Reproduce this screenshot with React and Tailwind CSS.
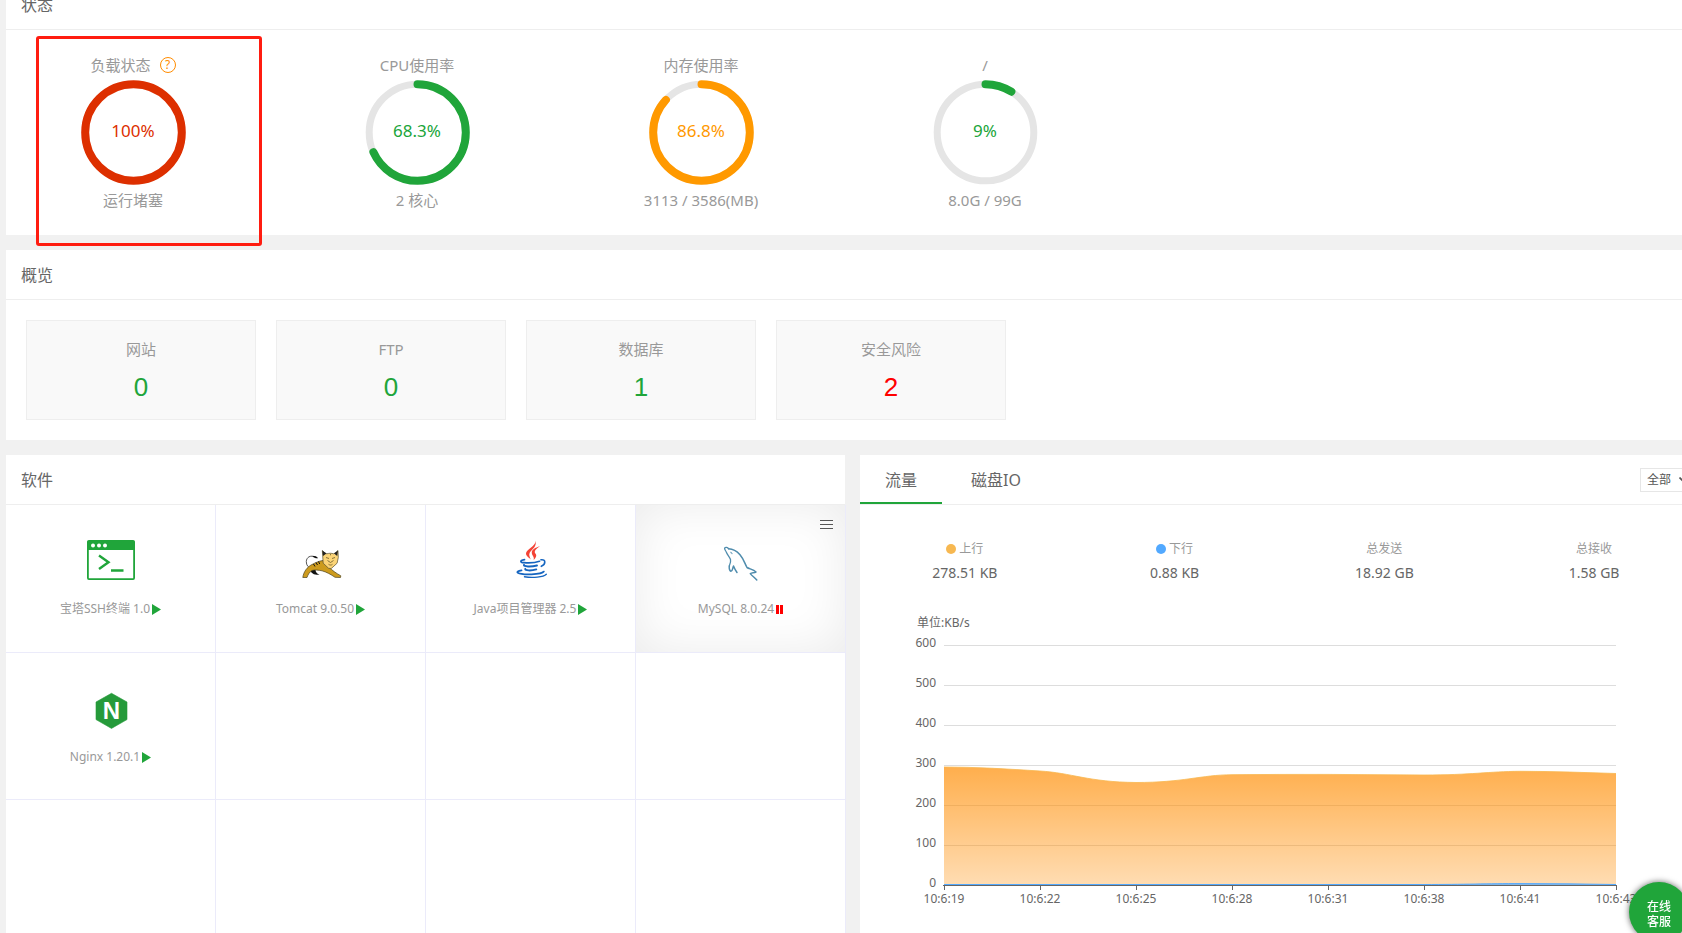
import { useState } from 'react';
import clsx from 'clsx';

const gauges = [
  { title: '负载状态', help: true, percent: 100, label: '100%', desc: '运行堵塞', color: '#dd2f00' },
  { title: 'CPU使用率', percent: 68.3, label: '68.3%', desc: '2 核心', color: '#20a53a' },
  { title: '内存使用率', percent: 86.8, label: '86.8%', desc: '3113 / 3586(MB)', color: '#ff9900' },
  { title: '/', percent: 9, label: '9%', desc: '8.0G / 99G', color: '#20a53a' },
];

const overview = [
  { name: '网站', count: 0 },
  { name: 'FTP', count: 0 },
  { name: '数据库', count: 1 },
  { name: '安全风险', count: 2, danger: true },
];

const software = [
  { name: '宝塔SSH终端 1.0', icon: TerminalIcon, running: true },
  { name: 'Tomcat 9.0.50', icon: TomcatIcon, running: true },
  { name: 'Java项目管理器 2.5', icon: JavaIcon, running: true },
  { name: 'MySQL 8.0.24', icon: MysqlIcon, running: false, active: true },
  { name: 'Nginx 1.20.1', icon: NginxIcon, running: true },
];

const traffic = [
  { name: '上行', value: '278.51 KB', dot: 'bg-[#f7b851]' },
  { name: '下行', value: '0.88 KB', dot: 'bg-[#52a9ff]' },
  { name: '总发送', value: '18.92 GB' },
  { name: '总接收', value: '1.58 GB' },
];

const yLabels = [600, 500, 400, 300, 200, 100, 0];
const xLabels = ['10:6:19', '10:6:22', '10:6:25', '10:6:28', '10:6:31', '10:6:38', '10:6:41', '10:6:43'];

const upLine =
  'M0 122 C32 122 64 124 96 126 C128 128 144 137 192 137.5 C240 137.5 256 130 288 129.7 C320 129.4 352 129.4 384 129.4 C416 129.4 448 130 480 130 C528 130 544 126.5 576 126.3 C608 126.3 640 127.5 672 128.5';
const downLine = 'M0 239.5 H480 C520 239.5 544 238.6 576 238.6 C608 238.6 640 239 672 239.5';

function TerminalIcon() {
  return (
    <svg className="size-12" viewBox="0 0 48 48" fill="none">
      <rect x="0.9" y="3.9" width="46.2" height="38.2" rx="1" stroke="#20a53a" strokeWidth="1.8" />
      <path d="M0.5 4h47v9h-47z" fill="#20a53a" />
      <circle cx="6" cy="8.4" r="2" fill="#fff" />
      <circle cx="12" cy="8.4" r="2" fill="#fff" />
      <circle cx="18" cy="8.4" r="2" fill="#fff" />
      <path d="M12 18.5l9.5 6.7-9.5 6.8M24 33.5h12.5" stroke="#20a53a" strokeWidth="2.4" />
    </svg>
  );
}

function TomcatIcon() {
  return (
    <svg className="size-12" viewBox="0 0 48 48" fill="none">
      {/* 尾巴 */}
      <path d="M19 20.2C13 17.5 9.5 20.5 9.3 24.5c-.1 4 2.2 6 5 7.5" stroke="#444" strokeWidth="0.9" />
      <path d="M15.5 19.3c2-1 5 0 5.5 2-2 .3-4-.4-5.5-2z" fill="#111" />
      {/* 身体 */}
      <path d="M13 32.5c1 4 4 5.5 9.5 5.3-3-1.3-4-2.8-4-5.3z" fill="#111" />
      <path
        d="M5.8 40.5C6.5 35 10 30 15 27.5c3.5-1.8 7-3.5 11-4l5.5 6.5c4 3.5 8 6.5 12.3 8.8l-.3 1.7-5.5-.2c-4-2.8-8.500-5.300-13-6.500-3.500-.6-7-1.300-10-.3-2.500 1.500-4 4-5 7z"
        fill="#cd9b1d"
        stroke="#4d431f"
        strokeWidth="0.7"
      />
      <path d="M16.500 27l1.500 2.500M19 25.500l1.500 2.500M21.500 24.500l1.200 2.500" stroke="#111" strokeWidth="1" />
      {/* 头 */}
      <path
        d="M25.3 13.500c1.500 1.500 3 3 4.500 3.300 2.500-.7 4.500-.7 7 0 1.500-.8 3-2 4.200-3.300l.3 7-1.200 5.700-6 5.500-2.600-.5-5.300-5z"
        fill="#fbd477"
        stroke="#57502f"
        strokeWidth="0.7"
      />
      <path d="M25.3 13.500l.7 5.500 3.500-2.500zM41 13.500l-.8 5.500-3.200-2.500z" fill="#222" />
      <path
        d="M29 20.500l3 1M38 20.500l-3 1M33.500 16.800v1.500M30.500 23.500l3 2 3-2M31.500 27.300c1.500 1 3 1 4 0"
        stroke="#6b5a28"
        strokeWidth="0.8"
      />
    </svg>
  );
}

function JavaIcon() {
  return (
    <svg className="size-12" viewBox="0 0 48 48" fill="none">
      <g fill="#f44336">
        <path d="M28.300 3.700C29.500 9 19 12 19 16.500c0 2.500 3 4 4.700 6-1-3-2.200-4.500-.9-7C24.500 12.500 30.500 9.500 28.300 3.700z" />
        <path d="M33 9.300c-5 1.200-8.500 3.700-8.200 6.700.2 2.500 2.700 3.500 1.900 7 2.800-3 3.300-4.500 1.500-6.700C27 14.500 28.500 12 33 9.300z" />
      </g>
      <g stroke="#1565c0" strokeLinecap="round">
        <path d="M17.500 22.700c-5 .8-4.500 2.700-.5 3 5 .4 11 .2 15.500-1.400" strokeWidth="1.700" />
        <path d="M34 22.800c5-.8 5 4.500.3 6.500" strokeWidth="1.600" />
        <path d="M17 27.800c-1 2 7 2.200 13 .7" strokeWidth="1.900" />
        <path d="M18.300 31.800c-.8 2 6 2.100 11 .6" strokeWidth="1.900" />
        <path d="M14.500 33.300c-3.500.6-5 1.600-3.700 2.500 4 2.500 24 2 26-1.200" strokeWidth="1.800" />
        <path d="M17.500 39.800c8 1.200 19 .4 21.800-2.600" strokeWidth="1.400" />
      </g>
    </svg>
  );
}

function MysqlIcon() {
  return (
    <svg className="size-12" viewBox="0 0 48 48" fill="none" stroke="#4f8cad" strokeLinejoin="round" strokeLinecap="round">
      <path d="M12.300 29C12 31.500 12.500 33.500 14 34.300c1.500 0 1.500-3 2.500-5.300 1 2.500 2 4.500 3.500 6.500" strokeWidth="1.500" />
      <path
        d="M12.300 29c1.200-2.500 1.800-4 1.200-6.500C12.500 19.500 10.500 18 9.500 15.500 8.700 13.500 7.300 12.500 7.600 11.200c1-1.400 3-.8 4.200.6"
        strokeWidth="1.300"
      />
      <path
        d="M11.500 11.700c4.500.1 8.500 2.500 11.500 6 3.500 4 4.700 8.500 7 12.800 2.500 1.500 6.500 1.800 9 4.500-2 .9-4 .7-5.700 1.600 1.700 2.400 4.500 4 6.500 6.400"
        strokeWidth="1.500"
      />
      <path d="M14 15.300c1 .2 1.300 1 1.200 1.700-.8-.1-1.200-.8-1.200-1.700z" strokeWidth="0.6" />
    </svg>
  );
}

function NginxIcon() {
  return (
    <svg className="size-12" viewBox="0 0 48 48">
      <path
        d="M24.500 8.300L40 17v17.600l-15.500 8.800L9 34.600V17z"
        fill="#259a3a"
        stroke="#259a3a"
        strokeWidth="0.6"
        strokeLinejoin="round"
      />
      <text
        x="24.5"
        y="34"
        textAnchor="middle"
        className="font-['Liberation_Sans',sans-serif] text-[24px] font-bold"
        fill="#fff"
      >
        N
      </text>
    </svg>
  );
}

function Status({ running }) {
  return running ? (
    <svg className="ml-0.5 h-[11px] w-[9px]" viewBox="0 0 9 11" fill="#20a53a">
      <path d="M0 0l9 5.500L0 11z" />
    </svg>
  ) : (
    <svg className="ml-0.5 h-[9px] w-[7px]" viewBox="0 0 7 9" fill="#ff0000">
      <path d="M0 0h3v9H0zM4 0h3v9H4z" />
    </svg>
  );
}

function PanelTitle({ children }) {
  return <h2 className="h-[50px] border-b border-[#eee] pl-[15px] text-base leading-[50px] text-[#666]">{children}</h2>;
}

function Gauge({ item }) {
  const full = item.percent === 100;
  return (
    <li className="flex w-[204px] flex-col items-center text-[15px] leading-[30px] text-[#999]">
      <div className="flex items-center gap-[9px]">
        <span>{item.title}</span>
        {item.help && (
          <button
            aria-label="负载说明"
            className="flex size-4 items-center justify-center rounded-full border border-[#ff8c00] text-xs leading-none text-[#ff8c00]"
          >
            ?
          </button>
        )}
      </div>
      <div className="grid size-[105px] place-items-center">
        <svg className="col-start-1 row-start-1 size-[105px] -rotate-90" viewBox="0 0 105 105" fill="none">
          <circle cx="52.5" cy="52.5" r="48.3" stroke="#e5e5e5" strokeWidth="7" />
          <circle
            cx="52.5"
            cy="52.5"
            r="48.3"
            pathLength="100"
            stroke={item.color}
            strokeWidth="8"
            strokeLinecap="round"
            strokeDasharray={full ? undefined : `${item.percent} 100`}
          />
        </svg>
        <span className="col-start-1 row-start-1 pb-1 text-[17px]" style={{ color: item.color }}>
          {item.label}
        </span>
      </div>
      <div>{item.desc}</div>
    </li>
  );
}

function Chart() {
  return (
    <div className="pr-[83px] pl-[84px] text-xs text-[#666]">
      <div className="-ml-[27px] h-4 leading-4">单位:KB/s</div>
      <div className="relative mt-3.5 h-[240px]">
        <div className="absolute -top-[11px] right-full flex flex-col pr-2 text-right">
          {yLabels.map((y) => (
            <span key={y} className="h-10 leading-[18px]">
              {y}
            </span>
          ))}
        </div>
        <svg className="block h-[246px] w-full overflow-visible" viewBox="0 0 672 246" preserveAspectRatio="none" fill="none">
          <defs>
            <linearGradient id="up" x1="0" y1="0" x2="0" y2="1">
              <stop offset="0" stopColor="#ff8c00" stopOpacity="0.7" />
              <stop offset="1" stopColor="#ff8c00" stopOpacity="0.3" />
            </linearGradient>
          </defs>
          {yLabels.slice(0, 6).map((y, i) => (
            <path key={y} d={`M0 ${i * 40 + 0.5}H672`} stroke="#ddd" />
          ))}
          <path d={`${upLine} V240 H0Z`} fill="url(#up)" />
          <path d={upLine} stroke="#f7b851" strokeWidth="0.8" />
          <path d={`${downLine} V240 H0Z`} fill="#52a9ff" fillOpacity="0.7" />
          <path d={downLine} stroke="#52a9ff" />
          <path d="M-1 240.5H673" stroke="#666" />
          {xLabels.map((x, i) => (
            <path key={x} d={`M${i * 96 + 0.5} 241v4`} stroke="#666" />
          ))}
        </svg>
      </div>
      <div className="mt-1.5 -mr-12 -ml-12 flex justify-between">
        {xLabels.map((x) => (
          <span key={x} className="w-24 text-center leading-4">
            {x}
          </span>
        ))}
      </div>
    </div>
  );
}

export default function App() {
  const [tab, setTab] = useState('流量');

  return (
    <div className="h-screen overflow-hidden bg-[#f1f1f1] font-['Noto_Sans','Noto_Sans_CJK_SC',sans-serif]">
      <main className="-mt-5 -mr-[17px] flex flex-col gap-[15px] pl-1.5">
        {/* 状态 */}
        <section className="relative bg-white">
          <PanelTitle>状态</PanelTitle>
          <ul className="flex gap-20 py-5 pl-[25px]">
            {gauges.map((item) => (
              <Gauge key={item.title} item={item} />
            ))}
          </ul>
          <div className="pointer-events-none absolute top-14 left-[30px] h-[210px] w-[226px] rounded-[3px] border-3 border-[#ff1c10]"></div>
        </section>

        {/* 概览 */}
        <section className="bg-white">
          <PanelTitle>概览</PanelTitle>
          <ul className="flex gap-5 p-5">
            {overview.map((item) => (
              <li key={item.name} className="h-[100px] w-[230px] border border-[#eee] bg-[#f9f9f9] pt-4 text-center">
                <p className="text-[15px] leading-6 text-[#999]">{item.name}</p>
                <a
                  href="#"
                  className={clsx(
                    "mt-1.5 block font-['Liberation_Sans',sans-serif] text-[26px] leading-10",
                    item.danger ? 'text-[#ff0000]' : 'text-[#20a53a]'
                  )}
                >
                  {item.count}
                </a>
              </li>
            ))}
          </ul>
        </section>

        <div className="grid grid-cols-2 gap-[15px]">
          {/* 软件 */}
          <section className="bg-white">
            <PanelTitle>软件</PanelTitle>
            <ul className="-mr-px grid grid-cols-4 grid-rows-[148px_147px_147px]">
              {Array.from({ length: 12 }, (_, i) => {
                const item = software[i];
                return (
                  <li
                    key={i}
                    className={clsx(
                      'relative flex flex-col items-center border-r border-b border-[#ebebfa] pt-8',
                      item?.active && 'shadow-[inset_0_0_50px_#ebebeb]'
                    )}
                  >
                    {item && (
                      <>
                        <item.icon />
                        <div className="mt-3.5 flex items-center text-xs leading-5 text-[#999]">
                          <span>{item.name}</span>
                          <Status running={item.running} />
                        </div>
                      </>
                    )}
                    {item?.active && (
                      <button aria-label="菜单" className="absolute top-[15px] right-3 flex w-[13px] flex-col gap-[3px]">
                        <span className="h-px bg-[#555]"></span>
                        <span className="h-px bg-[#555]"></span>
                        <span className="h-px bg-[#555]"></span>
                      </button>
                    )}
                  </li>
                );
              })}
            </ul>
          </section>

          {/* 流量 */}
          <section className="bg-white">
            <div className="flex h-[50px] items-center justify-between border-b border-[#eee] pr-[9px]">
              <div className="flex h-full gap-1">
                {['流量', '磁盘IO'].map((name) => (
                  <button
                    key={name}
                    onClick={() => setTab(name)}
                    className={clsx(
                      'border-b-2 px-[25px] pt-0.5 text-base text-[#666]',
                      tab === name ? 'border-[#20a53a]' : 'border-transparent'
                    )}
                  >
                    {name}
                  </button>
                ))}
              </div>
              <div className="relative">
                <select
                  aria-label="网卡"
                  className="block h-6 w-[50px] appearance-none border border-[#e6e6e6] bg-white pl-1.5 text-xs text-[#555]"
                >
                  <option>全部</option>
                </select>
                <svg className="pointer-events-none absolute top-[9px] right-1 h-[5px] w-[7px]" viewBox="0 0 7 5" fill="none">
                  <path d="M0.5 0.5l3 3 3-3" stroke="#555" strokeWidth="1.6" />
                </svg>
              </div>
            </div>
            <ul className="grid grid-cols-4 pt-[34px] pb-8">
              {traffic.map((item) => (
                <li key={item.name} className="text-center">
                  <p className="flex items-center justify-center gap-[3px] text-xs leading-5 text-[#999]">
                    {item.dot && <i className={clsx('size-2.5 rounded-full', item.dot)}></i>}
                    {item.name}
                  </p>
                  <p className="pt-1 text-sm leading-5 text-[#666]">{item.value}</p>
                </li>
              ))}
            </ul>
            <Chart />
          </section>
        </div>
      </main>

      <button className="fixed -right-[7px] -bottom-[9px] size-[60px] rounded-full bg-[#20a53a] px-4 pt-1 text-xs leading-[15px] font-medium text-white shadow-[0_0_6px_rgba(0,0,0,0.6)]">
        在线 客服
      </button>
    </div>
  );
}
